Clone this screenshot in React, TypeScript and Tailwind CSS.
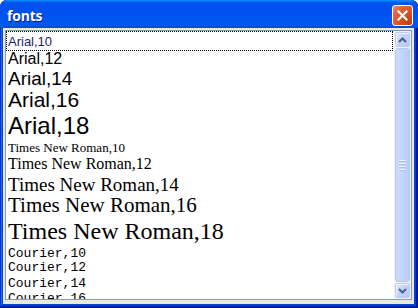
import React from "react";

type Item = { label: string; font: string; size: number; h: number };

const SANS = "font-['Liberation_Sans',Arial,sans-serif]";
const SERIF = "font-['Liberation_Serif','Times_New_Roman',serif]";
const MONO = "font-['Liberation_Mono','Courier_New',monospace]";

const items: Item[] = [
  { label: "Arial,12", font: SANS, size: 16, h: 18 },
  { label: "Arial,14", font: SANS, size: 19, h: 20 },
  { label: "Arial,16", font: SANS, size: 21, h: 25 },
  { label: "Arial,18", font: SANS, size: 24, h: 27 },
  { label: "Times New Roman,10", font: SERIF, size: 13, h: 15 },
  { label: "Times New Roman,12", font: SERIF, size: 16, h: 19 },
  { label: "Times New Roman,14", font: SERIF, size: 19, h: 20 },
  { label: "Times New Roman,16", font: SERIF, size: 21, h: 24 },
  { label: "Times New Roman,18", font: SERIF, size: 24, h: 28 },
  { label: "Courier,10", font: MONO, size: 13, h: 14 },
  { label: "Courier,12", font: MONO, size: 13, h: 16 },
  { label: "Courier,14", font: MONO, size: 13, h: 15 },
  { label: "Courier,16", font: MONO, size: 13, h: 16 },
];

function ScrollButton({ dir }: { dir: "up" | "down" }) {
  return (
    <div className="h-[17px] w-[17px] shrink-0 p-[1px]">
      <div className="flex h-full w-full items-center justify-center rounded-[2px] border border-[#bccbf2] bg-[linear-gradient(135deg,#dde7fe,#c3d3fc_45%,#b5c9f7)] shadow-[inset_1px_1px_#eef3ff]">
        <svg width="9" height="6" viewBox="0 0 9 6">
          {dir === "up" ? (
            <path d="M1 5 L4.5 1.5 L8 5" fill="none" stroke="#4d6185" strokeWidth="2" />
          ) : (
            <path d="M1 1 L4.5 4.5 L8 1" fill="none" stroke="#4d6185" strokeWidth="2" />
          )}
        </svg>
      </div>
    </div>
  );
}

function Scrollbar() {
  return (
    <div className="flex w-[17px] shrink-0 flex-col bg-[#f3f1ea]">
      <ScrollButton dir="up" />
      <div className="flex min-h-0 flex-1 px-[1px]">
        <div className="flex flex-1 items-center justify-center rounded-[3px] border border-[#b4c8f4] bg-[linear-gradient(to_right,#cbd9fc,#c3d4fb_50%,#b8ccf8)]">
          <div className="flex flex-col gap-[1px]">
            {[0, 1, 2, 3].map((i) => (
              <div key={i} className="flex flex-col">
                <div className="h-[1px] w-[7px] bg-[#eef3ff]" />
                <div className="h-[1px] w-[7px] bg-[#a9c0f5]" />
              </div>
            ))}
          </div>
        </div>
      </div>
      <ScrollButton dir="down" />
    </div>
  );
}

function CloseButton() {
  return (
    <div className="flex h-[21px] w-[21px] shrink-0 items-center justify-center rounded-[3px] border border-white bg-[radial-gradient(circle_at_85%_85%,#c0400f_0%,#dc5428_50%,#e1643e_72%,#eb8f73_100%)]">
      <svg width="11" height="11" viewBox="0 0 11 11">
        <path d="M1.5 1.5 L9.5 9.5 M9.5 1.5 L1.5 9.5" stroke="#ffffff" strokeWidth="2.2" strokeLinecap="square" />
      </svg>
    </div>
  );
}

export default function App() {
  return (
    <div className="flex h-[308px] w-[418px] flex-col overflow-hidden rounded-t-[7px] bg-[#0843d8] shadow-[inset_-1px_-1px_#00138c,inset_1px_1px_#0831d9,inset_-2px_-2px_#001ea0,inset_2px_2px_#166aee,inset_-3px_-3px_#003bda]">
      <div className="flex h-[28px] shrink-0 items-start justify-between rounded-t-[7px] bg-[linear-gradient(180deg,#0997ff_0%,#0053ee_10%,#0050ee_40%,#0058f0_80%,#0055e8_92%,#0048d8_100%)] pl-[7px] pr-[5px] pt-[5px]">
        <span className="mt-[3px] font-['Open_Sans',sans-serif] text-[14px] font-bold leading-[15px] tracking-[-0.2px] text-white [text-shadow:1px_1px_#0a1883]">
          fonts
        </span>
        <CloseButton />
      </div>
      <div className="mb-[4px] ml-[3px] mr-[4px] flex min-h-0 flex-1 flex-col bg-[#ece9d8] px-[2px] pb-[4px] pt-[2px]">
        <div className="flex min-h-0 flex-1 overflow-hidden border border-[#7f9db9] bg-white">
          <div className="flex min-h-0 flex-1 flex-col overflow-hidden">
            <div className={`mr-[1px] h-[20px] shrink-0 border border-dotted border-black pl-[1px] pt-[3px] ${SANS} text-[13px] leading-none text-[#231d6e]`}>
              Arial,10
            </div>
            {items.map((it) => (
              <div
                key={it.label}
                className={`shrink-0 whitespace-nowrap pl-[2px] leading-none text-black ${it.font}`}
                style={{ height: it.h, fontSize: it.size }}
              >
                {it.label}
              </div>
            ))}
          </div>
          <Scrollbar />
        </div>
      </div>
    </div>
  );
}
